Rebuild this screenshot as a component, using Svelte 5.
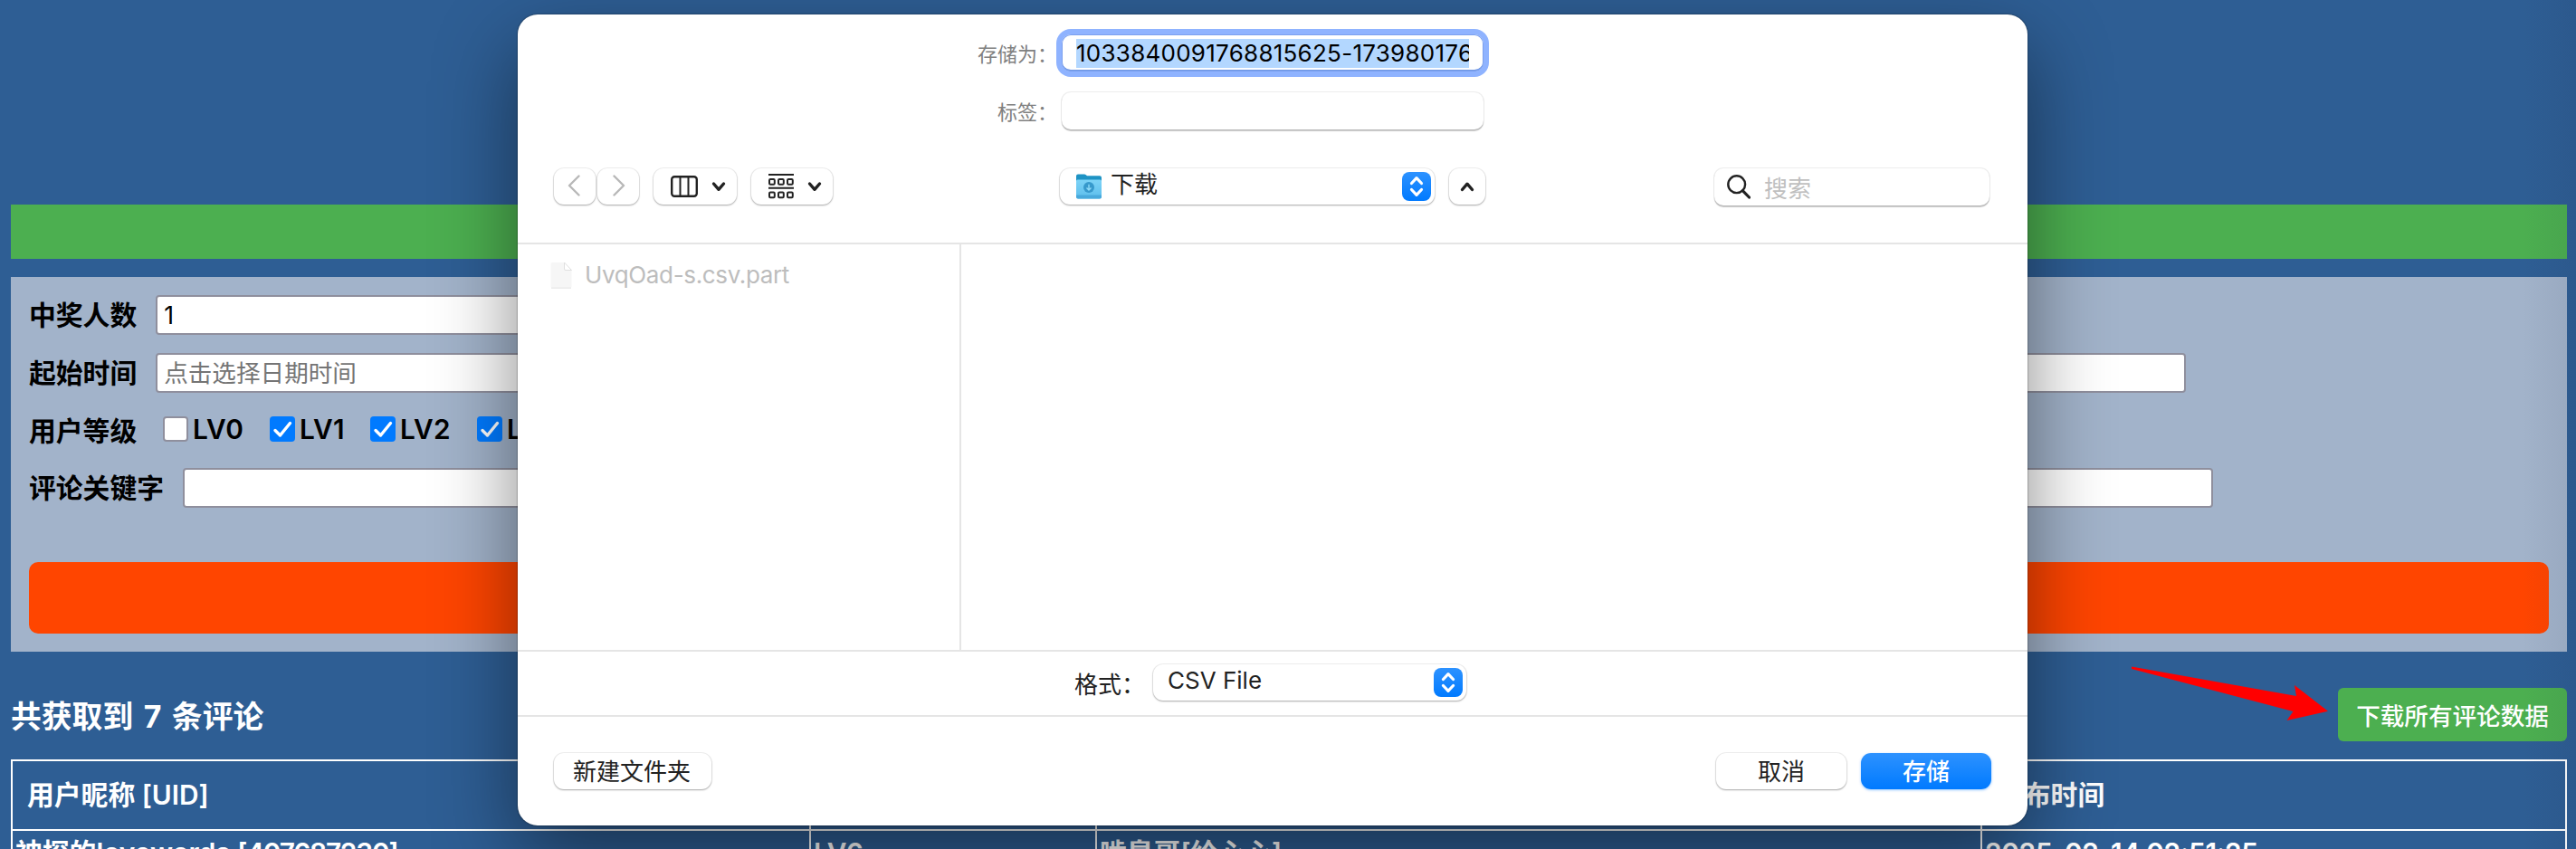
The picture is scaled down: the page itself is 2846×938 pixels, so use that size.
<script>
  const levels = [
    { name: 'LV0', on: false, w: 118 },
    { name: 'LV1', on: true, w: 111 },
    { name: 'LV2', on: true, w: 118 },
    { name: 'LV3', on: true, w: 118 },
    { name: 'LV4', on: true, w: 118 },
    { name: 'LV5', on: true, w: 118 },
    { name: 'LV6', on: true, w: 118 }
  ];
</script>

{#snippet chevron(up)}
  <svg class="chev" width="16" height="12" viewBox="0 0 16 12">
    <path d={up ? 'M2.5 9.5 8 3.2l5.500 6.3' : 'M2.500 3 8 9.300 13.500 3'} />
  </svg>
{/snippet}

{#snippet stepper()}
  <span class="stepper">
    <svg width="32" height="32" viewBox="0 0 32 32">
      <path d="M10.500 12.500 16 6.700l5.500 5.800M10.500 19.500 16 25.300l5.500-5.800" />
    </svg>
  </span>
{/snippet}

<div class="page">
  <div class="banner"></div>

  <section class="panel">
    <div class="row"><label for="count">中奖人数</label><div id="count" class="field wide">1</div></div>
    <div class="row"><label for="start">起始时间</label><div id="start" class="field mid hint">点击选择日期时间</div></div>
    <div class="row levels">
      <span class="name">用户等级</span>
      {#each levels as l}
        <span class="level" style="width:{l.w}px">
          <span class="box" class:on={l.on}>
            {#if l.on}
              <svg width="28" height="28" viewBox="0 0 28 28"><path d="M6 15.500 11.500 21 22.500 7.500" /></svg>
            {/if}
          </span>{l.name}
        </span>
      {/each}
    </div>
    <div class="row last"><label for="keyword">评论关键字</label><div id="keyword" class="field long"></div></div>
    <div class="draw"></div>
  </section>

  <div class="summary">
    <h2>共获取到 7 条评论</h2>
    <button class="download">下载所有评论数据</button>
  </div>

  <div class="table">
    <div class="tr head">
      <div class="c1">用户昵称 [UID]</div><div class="c2">等级</div><div class="c3">评论内容</div><div class="c4">发布时间</div>
    </div>
    <div class="tr">
      <div class="c1">神探的lovewords <span class="uid">[407687230]</span></div><div class="c2">LV6</div><div class="c3">啃臭哥[给心心]</div><div class="c4"><span class="time">2025-02-14 02:51:25</span></div>
    </div>
  </div>

  <div class="edge"></div>
  <svg class="arrow" width="220" height="64" viewBox="2353 735 220 64">
    <path d="M2355 736.500 2537 769l-2-12 37 28.700L2526.500 796l7-10L2355 739z" fill="#f00" />
  </svg>

  <div class="dialog">
    <div class="top">
      <div class="frow"><span class="lab">存储为：</span><div class="input focus"><span class="sel">1033840091768815625-173980176</span></div></div>
      <div class="frow second"><span class="lab">标签：</span><div class="input"></div></div>
      <div class="tools">
        <div class="ctl nav">
          <svg width="14" height="24" viewBox="0 0 14 24"><path d="M12.500 1.500 2 12l10.500 10.500" /></svg>
        </div>
        <div class="ctl nav next">
          <svg width="14" height="24" viewBox="0 0 14 24"><path d="M1.500 1.500 12 12 1.500 22.500" /></svg>
        </div>
        <div class="ctl view">
          <svg width="30" height="24" viewBox="0 0 30 24" class="ink">
            <rect x="1.200" y="1.200" width="27.600" height="21.600" rx="3" stroke-width="2.400" />
            <path d="M10.500 2v20M19.500 2v20" stroke-width="2" />
          </svg>
          {@render chevron(false)}
        </div>
        <div class="ctl view group">
          <svg width="28" height="28" viewBox="0 0 28 28" class="ink" stroke-width="2">
            <path d="M0 1h28M0 15.800h28" />
            {#each [1, 11, 21] as x}
              <rect {x} y="6" width="5.800" height="5.800" rx="1.200" />
              <rect {x} y="20.500" width="5.800" height="5.800" rx="1.200" />
            {/each}
          </svg>
          {@render chevron(false)}
        </div>
        <div class="ctl place">
          <svg width="30" height="30" viewBox="0 0 30 30">
            <defs>
              <linearGradient id="fold" x2="0" y2="1"><stop offset="0" stop-color="#7dd3f7" /><stop offset="1" stop-color="#5bbdec" /></linearGradient>
            </defs>
            <path d="M1 3.500Q1 1.500 3 1.500h7q1 0 1.800.8l1.200 1H27q2 0 2 2V20H1z" fill="#1e93c4" />
            <path d="M1 9q0-1.500 1.500-1.500h25Q29 7.500 29 9v17.500q0 2-2 2H3q-2 0-2-2z" fill="url(#fold)" />
            <path d="M1 24.500h28v2q0 2-2 2H3q-2 0-2-2z" fill="#48a9dc" />
            <circle cx="15" cy="16" r="6" fill="#3799cc" />
            <path d="M15 12.800v6M12.500 16.500 15 19l2.500-2.500" fill="none" stroke="#8edaf8" stroke-width="1.400" />
          </svg>
          <span class="txt">下载</span>
          {@render stepper()}
        </div>
        <div class="ctl up">{@render chevron(true)}</div>
        <div class="input search">
          <svg width="26" height="27" viewBox="0 0 26 27" class="ink">
            <circle cx="10.700" cy="10.700" r="9.400" stroke-width="2.400" /><path d="M17.300 17.600 24.500 25" stroke-width="3.200" stroke-linecap="round" />
          </svg>
          搜索
        </div>
      </div>
    </div>
    <div class="browser">
      <div class="col">
        <svg width="26" height="32" viewBox="0 0 26 32">
          <path d="M3 2h13l8.500 8.500V28.500q0 1.500-1.500 1.500H3q-1.500 0-1.500-1.500v-25Q1.500 2 3 2z" fill="#f6f6f6" />
          <path d="M2 30.200h22" stroke="#e2e2e2" />
          <path d="M16.500 2v7q0 1.500 1.500 1.500h6.500z" fill="#fff" stroke="#e0e0e0" />
        </svg>
        <span class="file">UvqOad-s.csv.part</span>
      </div>
    </div>
    <div class="format">
      <span>格式：</span>
      <div class="ctl kind"><span class="txt">CSV File</span>{@render stepper()}</div>
    </div>
    <div class="foot">
      <div class="ctl btn newf">新建文件夹</div>
      <div class="ctl btn">取消</div>
      <div class="ctl btn save">存储</div>
    </div>
  </div>
</div>

<style>
  :global(body) { background: #2e5e94; }
  .page {
    position: relative; box-sizing: border-box; width: 2846px; height: 938px; overflow: hidden;
    padding: 226px 10px 0 12px; background: #2e5e94;
    font-family: Inter, "Noto Sans CJK SC", sans-serif;
  }
  .page div { box-sizing: border-box; }
  .banner { height: 60px; background: #4caf50; }
  .panel {
    margin-top: 20px; height: 414px; padding: 20px; box-sizing: border-box;
    display: flex; flex-direction: column; background: #a2b3ca; font-size: 29.8px; font-weight: 600; color: #000;
  }
  .row { display: flex; align-items: center; height: 44px; margin-bottom: 20px; white-space: nowrap; }
  .row label { margin-right: 21px; line-height: 44px; }
  .levels { height: 40px; margin: 0 0 23px; }
  .name { width: 148px; }
  .level { display: flex; align-items: center; gap: 5px; letter-spacing: .3px; }
  .box { width: 28px; height: 28px; box-sizing: border-box; border: 2px solid #8f8f9d; border-radius: 4px; background: #fff; }
  .box.on { border: 0; background: #007aff; }
  .box svg { display: block; fill: none; stroke: #fff; stroke-width: 3.4; stroke-linecap: round; stroke-linejoin: round; }
  .field {
    height: 44px; border: 2px solid #8f8f9d; border-radius: 4px; background: #fff;
    padding-left: 7px; line-height: 40px; font-size: 26.600px; font-weight: 400;
  }
  .wide { width: 1700px; }
  .mid { width: 2243px; }
  .hint { color: #757575; }
  .long { width: 2243px; }
  .draw { margin-top: auto; height: 79px; border-radius: 10px; background: #ff4500; }
  .row.last { margin-bottom: 0; }

  .summary { display: flex; justify-content: space-between; align-items: center; height: 59px; margin-top: 40px; }
  h2 { margin: 0; font-size: 33.800px; font-weight: 700; color: #fff; word-spacing: 3.500px; }
  .download {
    width: 253px; height: 59px; padding: 0; border: 0; border-radius: 6px; background: #4caf50; color: #fff;
    font: 500 26.600px Inter, "Noto Sans CJK SC", sans-serif;
  }
  .table { margin-top: 20px; height: 160px; border: 2px solid #fff; color: #fff; font-size: 29.800px; font-weight: 600; }
  .tr { display: flex; height: 77px; border-bottom: 2px solid #fff; line-height: 49px; white-space: nowrap; }
  .tr > div { padding-left: 3px; border-right: 2px solid #fff; }
  .tr.head > div { padding-left: 16px; line-height: 75px; }
  .tr .c1 { width: 882px; }
  .tr .c2 { width: 316px; }
  .tr .c3 { width: 978px; }
  .tr .c4 { flex: 1; border-right: 0; }
  .uid { letter-spacing: -1.200px; }
  .time { letter-spacing: -.3px; }

  .edge { position: absolute; top: 0; right: 0; width: 60px; height: 938px; background: linear-gradient(90deg, transparent, rgba(20, 20, 50, .07)); }
  .arrow { position: absolute; left: 2353px; top: 735px; }

  .dialog {
    position: absolute; left: 572px; top: 16px; width: 1668px; height: 896px; border-radius: 22px; background: #fff;
    box-shadow: 0 0 2px rgba(0, 0, 0, .6), 0 36px 92px rgba(0, 0, 0, .47); font-size: 26px; color: #222;
    display: flex; flex-direction: column;
  }
  .top { height: 254px; padding-top: 21px; border-bottom: 2px solid #e5e5e5; }
  .frow { display: flex; align-items: center; height: 42px; }
  .second { margin-top: 22px; }
  .lab { width: 596px; flex: none; text-align: right; font-size: 22px; color: #808080; white-space: nowrap; margin-right: 5px; }
  .input {
    width: 466px; height: 41px; border-radius: 10px; background: #fff;
    box-shadow: 0 0 0 1px rgba(0, 0, 0, .07), 0 1.500px 1px rgba(0, 0, 0, .22);
  }
  .focus { padding: 5px 16px 0; box-shadow: 0 0 0 6px #8fb3ff, inset 0 0 0 1px #7ba0ee, inset 0 -2px 0 #7097e4; }
  .sel { display: block; height: 32px; line-height: 32px; overflow: hidden; background: #b3d7ff; color: #000; white-space: nowrap; letter-spacing: .26px; }
  .tools { display: flex; margin: 43px 0 0 40px; }
  .ctl {
    display: flex; align-items: center; justify-content: center; height: 40px; border-radius: 11px; background: #fff; white-space: nowrap;
    box-shadow: 0 0 0 1px rgba(0, 0, 0, .06), 0 1px 2px rgba(0, 0, 0, .3);
  }
  .nav { width: 46px; padding: 0 3px 2px 0; }
  .next { margin-left: 2px; padding: 0 0 2px 1px; }
  .nav svg { fill: none; stroke: #b8b8b8; stroke-width: 2.400; stroke-linecap: round; stroke-linejoin: round; }
  .view { width: 92px; margin-left: 16px; gap: 15px; padding-left: 7px; }
  .group { width: 90px; }
  .ink { fill: none; stroke: #222; }
  .chev { fill: none; stroke: #222; stroke-width: 3.400; stroke-linecap: round; stroke-linejoin: round; }
  .place { width: 414px; margin-left: 251px; padding: 0 4px 0 17px; justify-content: flex-start; gap: 9px; }
  .txt { line-height: 36px; padding-bottom: 4px; }
  .stepper { margin-left: auto; width: 32px; height: 32px; border-radius: 8px; background: linear-gradient(#2d92ff, #007aff); }
  .stepper svg { display: block; fill: none; stroke: #fff; stroke-width: 3.200; stroke-linecap: round; stroke-linejoin: round; }
  .up { width: 40px; margin-left: 16px; }
  .search { width: 304px; margin-left: 253px; padding-left: 14px; display: flex; align-items: center; gap: 15px; color: #bfbfbf; }
  .browser { height: 450px; border-bottom: 2px solid #e5e5e5; }
  .col { display: flex; align-items: flex-start; width: 490px; height: 448px; padding: 18px 0 0 35px; border-right: 2px solid #e5e5e5; }
  .file { margin-left: 13px; line-height: 32px; color: #bdbdbd; letter-spacing: -.35px; }
  .format { display: flex; align-items: center; height: 72px; padding: 0 0 2px 615px; border-bottom: 2px solid #e5e5e5; white-space: nowrap; }
  .kind { width: 346px; margin-left: 9px; padding: 0 4px 0 16px; }
  .foot { display: flex; padding: 40px 40px 0; }
  .btn { width: 144px; margin-right: 16px; padding-bottom: 3px; }
  .newf { width: 174px; margin-right: auto; padding-right: 2px; }
  .save { margin-right: 0; color: #fff; font-weight: 500; background: linear-gradient(#2d92ff, #007aff); box-shadow: 0 1px 3px rgba(0, 122, 255, .4); }
</style>
